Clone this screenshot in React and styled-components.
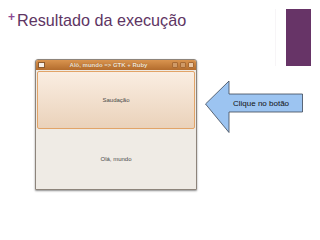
import React from "react";
import styled, { createGlobalStyle } from "styled-components";

const Global = createGlobalStyle`
  html, body { margin: 0; padding: 0; background: #fff; }
  body { width: 320px; height: 240px; overflow: hidden; font-family: "Liberation Sans", Arial, sans-serif; }
`;

const Page = styled.div`
  display: flex;
  width: 320px;
  height: 240px;
`;

const LeftCol = styled.div`
  width: 200px;
  display: flex;
  flex-direction: column;
`;

const Title = styled.h1`
  margin: 10px 0 0 8px;
  display: flex;
  align-items: flex-start;
  font-weight: normal;
  font-size: 16.2px;
  line-height: 20px;
  color: #5e3563;
  white-space: nowrap;
`;

const Plus = styled.span`
  font-size: 12px;
  line-height: 12px;
  color: #8e4a94;
  margin: 1px 2px 0 0;
  font-weight: bold;
`;

const Window = styled.div`
  margin: 29px 0 0 35px;
  width: 162px;
  height: 131px;
  box-sizing: border-box;
  border: 1px solid #8d847b;
  border-radius: 3px 3px 1px 1px;
  background: #efebe5;
  box-shadow: 0 1px 2px rgba(0, 0, 0, 0.45);
  display: flex;
  flex-direction: column;
  overflow: hidden;
`;

const TitleBar = styled.div`
  height: 10px;
  flex: none;
  background: linear-gradient(#d9944f, #b36c2d);
  display: flex;
  align-items: center;
  padding: 0 2px;
  gap: 3px;
`;

const WinIcon = styled.span`
  width: 5px;
  height: 4px;
  background: #f6efe8;
  border: 1px solid #8a5a30;
  flex: none;
`;

const WinTitle = styled.span`
  flex: 1;
  text-align: center;
  font-size: 6px;
  font-weight: bold;
  color: #f4e6d6;
  text-shadow: 0 0 1px #8a5020;
  white-space: nowrap;
`;

const Controls = styled.div`
  display: flex;
  gap: 2px;
`;

const Ctrl = styled.span`
  width: 6px;
  height: 6px;
  border-radius: 1px;
  background: ${p => (p.$close ? "#e9c7a5" : "#cf9a68")};
  border: 1px solid #a86a34;
  box-sizing: border-box;
`;

const Body = styled.div`
  flex: 1;
  display: flex;
  flex-direction: column;
  padding: 1px;
`;

const Button = styled.div`
  height: 58px;
  box-sizing: border-box;
  border: 1px solid #e2a468;
  border-radius: 2px;
  background: linear-gradient(#faeee2, #ead2ba);
  display: flex;
  align-items: center;
  justify-content: center;
  font-size: 6px;
  color: #4a4a4a;
`;

const Label = styled.div`
  flex: 1;
  display: flex;
  align-items: center;
  justify-content: center;
  font-size: 6px;
  color: #4a4a4a;
`;

const RightCol = styled.div`
  flex: 1;
  display: flex;
  flex-direction: column;
`;

const Decor = styled.div`
  margin-top: 9px;
  height: 57px;
  display: flex;
`;

const FaintLine = styled.div`
  margin-left: 75px;
  width: 1px;
  background: #f7f5f7;
`;

const Bar = styled.div`
  margin-left: 10px;
  width: 25px;
  background: #673467;
`;

const ArrowBox = styled.div`
  position: relative;
  margin: 14px 0 0 4px;
  width: 100px;
  height: 54px;
`;

const ArrowText = styled.span`
  position: absolute;
  left: 29px;
  top: 18.5px;
  font-size: 8px;
  line-height: 10px;
  color: #111;
  white-space: nowrap;
`;

export default function App() {
  return (
    <>
      <Global />
      <Page>
        <LeftCol>
          <Title>
            <Plus>+</Plus>Resultado da execução
          </Title>
          <Window>
            <TitleBar>
              <WinIcon />
              <WinTitle>Alô, mundo =&gt; GTK + Ruby</WinTitle>
              <Controls>
                <Ctrl />
                <Ctrl />
                <Ctrl $close />
              </Controls>
            </TitleBar>
            <Body>
              <Button>Saudação</Button>
              <Label>Olá, mundo</Label>
            </Body>
          </Window>
        </LeftCol>
        <RightCol>
          <Decor>
            <FaintLine />
            <Bar />
          </Decor>
          <ArrowBox>
            <svg width="100" height="54" viewBox="0 0 100 54">
              <polygon
                points="1.5,24 25,1 25,14 98.5,14 98.5,32 25,32 25,52.5"
                fill="#9cc4f1"
                stroke="#3c4656"
                strokeWidth="0.8"
              />
            </svg>
            <ArrowText>Clique no botão</ArrowText>
          </ArrowBox>
        </RightCol>
      </Page>
    </>
  );
}
